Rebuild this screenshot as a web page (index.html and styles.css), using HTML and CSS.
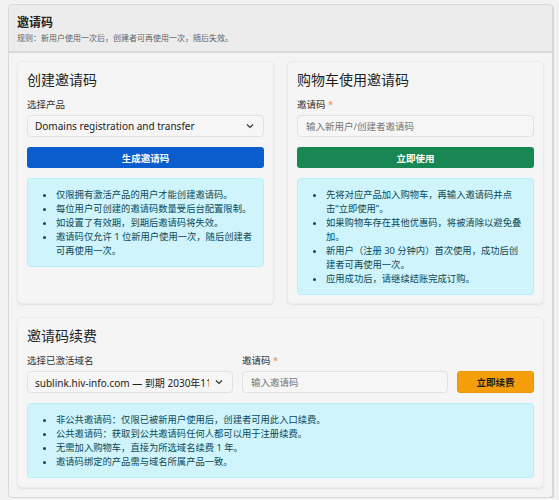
FILE: index.html
```html
<!DOCTYPE html>
<html>
<head>
<meta charset="UTF-8">
<link rel="stylesheet" href="styles.css">
</head>
<body>
<div class="panel">
  <div class="panel-head">
    <div class="panel-title">邀请码</div>
    <div class="panel-sub">规则：新用户使用一次后，创建者可再使用一次，随后失效。</div>
  </div>
  <div class="panel-body">
    <div class="row">
      <div class="card">
        <div class="card-title">创建邀请码</div>
        <div class="label">选择产品</div>
        <div class="select">
          <span class="select-text">Domains registration and transfer</span>
          <svg class="chev" width="8" height="6" viewBox="0 0 8 6"><path d="M1 1.5 4 4.5 7 1.5" fill="none" stroke="#333" stroke-width="1.2"/></svg>
        </div>
        <div class="btn blue">生成邀请码</div>
        <div class="alert">
          <ul>
            <li>仅限拥有激活产品的用户才能创建邀请码。</li>
            <li>每位用户可创建的邀请码数量受后台配置限制。</li>
            <li>如设置了有效期，到期后邀请码将失效。</li>
            <li>邀请码仅允许 1 位新用户使用一次，随后创建者可再使用一次。</li>
          </ul>
        </div>
      </div>
      <div class="card">
        <div class="card-title">购物车使用邀请码</div>
        <div class="label">邀请码 <span class="req">*</span></div>
        <div class="input"><span class="ph">输入新用户/创建者邀请码</span></div>
        <div class="btn green">立即使用</div>
        <div class="alert">
          <ul>
            <li>先将对应产品加入购物车，再输入邀请码并点击“立即使用”。</li>
            <li>如果购物车存在其他优惠码，将被清除以避免叠加。</li>
            <li>新用户（注册 30 分钟内）首次使用，成功后创建者可再使用一次。</li>
            <li>应用成功后，请继续结账完成订购。</li>
          </ul>
        </div>
      </div>
    </div>
    <div class="card wide">
      <div class="card-title">邀请码续费</div>
      <div class="renew">
        <div class="field">
          <div class="label">选择已激活域名</div>
          <div class="select">
            <span class="select-text">sublink.hiv-info.com — 到期 2030年11月20日</span>
            <svg class="chev" width="8" height="6" viewBox="0 0 8 6"><path d="M1 1.5 4 4.5 7 1.5" fill="none" stroke="#333" stroke-width="1.2"/></svg>
          </div>
        </div>
        <div class="field">
          <div class="label">邀请码 <span class="req">*</span></div>
          <div class="input"><span class="ph">输入邀请码</span></div>
        </div>
        <div class="btn orange">立即续费</div>
      </div>
      <div class="alert">
        <ul>
          <li>非公共邀请码：仅限已被新用户使用后，创建者可用此入口续费。</li>
          <li>公共邀请码：获取到公共邀请码任何人都可以用于注册续费。</li>
          <li>无需加入购物车，直接为所选域名续费 1 年。</li>
          <li>邀请码绑定的产品需与域名所属产品一致。</li>
        </ul>
      </div>
    </div>
  </div>
</div>
</body>
</html>
```

FILE: styles.css
```css
body{margin:0;background:#f2f2f2;font-family:"Noto Sans","Noto Sans CJK SC",sans-serif;color:#222}
.panel{margin:4px 0 0 8px;width:543px;border:1px solid #d9d9d9;border-radius:4px;background:#f4f4f4;box-shadow:1px 1px 1px rgba(0,0,0,.12)}
.panel-head{background:#ececec;border-bottom:2px solid #d8d8d8;padding:10px 8px 7px;border-radius:4px 4px 0 0}
.panel-title{font-size:12px;line-height:16px;font-weight:bold;color:#222}
.panel-sub{font-size:8px;line-height:12px;margin-top:1px;color:#5f5f5f}
.panel-body{padding:8px 8px 9px}
.row{display:flex;gap:13px;margin-bottom:13px}
.card{flex:1;background:#f5f5f5;border:1px solid #ebebeb;border-radius:5px;padding:9px 9px 8px;box-shadow:0 1px 2px rgba(0,0,0,.08)}
.card.wide{padding-bottom:9px}
.card-title{font-size:14px;line-height:18px;margin-bottom:9px;color:#1f1f1f}
.label{font-size:9.5px;line-height:14px;margin-bottom:3px;color:#333}
.req{color:#e8893c}
.select,.input{height:20px;border:1px solid #e1e1e1;border-radius:4px;background:#f6f6f6;display:flex;align-items:center;padding:0 9px 0 7px;font-size:10px;color:#222}
.select-text{flex:1;min-width:0;white-space:nowrap;overflow:hidden}
.chev{margin-left:6px;flex:none}
.ph{color:#777;font-size:9.5px;padding-left:1px}
.btn{height:21px;border-radius:3px;display:flex;align-items:center;justify-content:center;font-size:9.5px;font-weight:bold;margin-top:10px;margin-bottom:10px}
.blue{background:#0b5ccc;color:#fff}
.green{background:#198754;color:#fff}
.orange{background:#f59e0b;color:#1d1d1d;border:1px solid #eb9508;margin:0;height:20px}
.alert{background:#cff4fc;border:1px solid #b6effb;border-radius:4px;padding:9px 10px 8px 8px;color:#0b4a58;font-size:9.3px;line-height:14px}
.alert ul{margin:0;padding-left:20px}
.renew{display:grid;grid-template-columns:minmax(0,1fr) minmax(0,1fr) 77px;gap:9px;align-items:end;margin-bottom:10px}
```
